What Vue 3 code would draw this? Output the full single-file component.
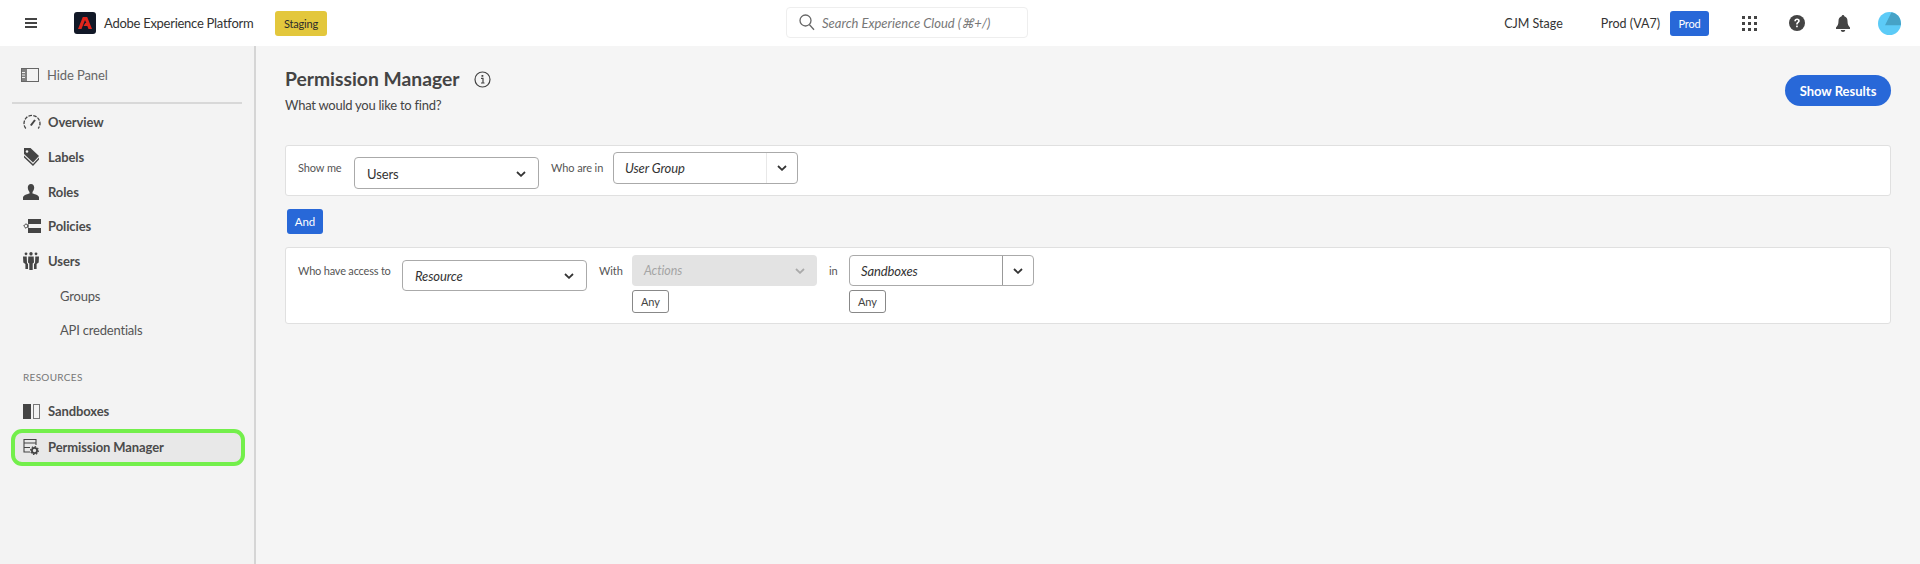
<script setup>
const navTop = [
  { label: 'Overview', icon: 'overview' },
  { label: 'Labels', icon: 'labels' },
  { label: 'Roles', icon: 'roles' },
  { label: 'Policies', icon: 'policies' },
  { label: 'Users', icon: 'users' },
]
const dots = []
for (let r = 0; r < 3; r++) for (let c = 0; c < 3; c++) dots.push({ x: c * 6, y: r * 6 })
</script>

<template>
  <div class="app">
    <header class="topbar">
      <div class="left">
        <svg class="burger" width="12" height="10" viewBox="0 0 12 10"><path d="M0 0h12v2H0zM0 4h12v2H0zM0 8h12v2H0z" fill="#444"/></svg>
        <svg class="logo" width="22" height="22" viewBox="0 0 22 22">
          <rect width="22" height="22" rx="3" fill="#111827"/>
          <path d="M8.800 5h4.400L18 17h-3.500l-1.200-3H9.500l1.900-3h.9L11 8 7.500 17H4z" fill="#e1251b"/>
        </svg>
        <span class="brand">Adobe Experience Platform</span>
        <span class="badge staging">Staging</span>
      </div>
      <div class="search">
        <svg width="16" height="17" viewBox="0 0 16 17" fill="none" stroke="#666" stroke-width="1.300"><circle cx="6.500" cy="6.500" r="5.500"/><path d="M10.500 10.800 15 15.700"/></svg>
        <span>Search Experience Cloud (⌘+/)</span>
      </div>
      <div class="right">
        <span class="org">CJM Stage</span>
        <span class="org prod">Prod (VA7)</span>
        <span class="badge prodbadge">Prod</span>
        <svg class="grid-ic" width="15" height="15" viewBox="0 0 15 15"><rect v-for="(d, i) in dots" :key="i" :x="d.x" :y="d.y" width="3" height="3" fill="#444"/></svg>
        <svg class="help-ic" width="16" height="16" viewBox="0 0 16 16"><circle cx="8" cy="8" r="8" fill="#444"/><path d="M5.300 6.200c0-1.600 1.200-2.600 2.800-2.600s2.700.9 2.700 2.300c0 1.900-2.100 1.900-2.100 3.500H7.100c0-2.300 1.900-2.300 1.900-3.400 0-.5-.4-.9-1-.9s-1 .4-1 1.100z" fill="#fff"/><rect x="7.100" y="10.500" width="1.700" height="1.800" rx=".5" fill="#fff"/></svg>
        <svg class="bell-ic" width="16" height="17" viewBox="0 0 16 17"><path d="M8 0c.8 0 1.300.6 1.300 1.300 2.200.6 3.200 2.400 3.200 4.700 0 3.500 1 5 2.500 6.500V14H1v-1.500C2.500 11 3.500 9.500 3.500 6c0-2.300 1-4.100 3.200-4.700C6.700.6 7.200 0 8 0zM5.800 15h4.400c0 1-1 2-2.200 2s-2.200-1-2.200-2z" fill="#444"/></svg>
        <svg class="avatar" width="23" height="23" viewBox="0 0 23 23"><circle cx="11.500" cy="11.500" r="11.500" fill="#5ccbf7"/><path d="M13.500.2A11.500 11.500 0 0 1 23 11.500c0 .9-.1 1.300-.2 1.800H7z" fill="#46a3c7"/></svg>
      </div>
    </header>

    <div class="body">
      <aside class="sidebar">
        <div class="hide">
          <svg width="18" height="14" viewBox="0 0 18 14" fill="none"><rect x=".5" y=".5" width="17" height="13" stroke="#666"/><rect x="1" y="1" width="5" height="12" fill="#808080"/><path d="M1 4.500h3M1 7h3M1 9.500h3" stroke="#eee"/></svg>
          <span>Hide Panel</span>
        </div>
        <div class="divider"></div>
        <nav class="nav">
          <div v-for="item in navTop" :key="item.label" class="nav-item">
            <span class="nav-ic">
              <svg v-if="item.icon === 'overview'" width="18" height="16" viewBox="0 0 18 16" fill="none" stroke="#444" stroke-width="1.300"><path d="M2.800 14.500A8 8 0 1 1 15.200 14.500" stroke-dasharray="3.500 1.200"/><path d="M7.800 11.500 12 6" stroke-width="2"/></svg>
              <svg v-else-if="item.icon === 'labels'" width="17" height="18" viewBox="0 0 17 18"><path d="M1 0h6.500L16 8l-6 6.500L1 6z" fill="#444"/><circle cx="4" cy="3.500" r="1.300" fill="#f3f3f3"/><path d="M1 7.500 10 16l6-6.500v2L10 18 1 9.500z" fill="#444"/></svg>
              <svg v-else-if="item.icon === 'roles'" width="16" height="16" viewBox="0 0 16 16"><path d="M8 0c2 0 3.200 1.500 3.200 3.600 0 1.800-.8 3.400-1.700 4.400v1.500c3 .7 6.500 2 6.500 4V16H0v-2.500c0-2 3.500-3.300 6.500-4V8C5.600 7 4.800 5.400 4.800 3.600 4.800 1.500 6 0 8 0z" fill="#444"/></svg>
              <svg v-else-if="item.icon === 'policies'" width="18" height="14" viewBox="0 0 18 14" fill="none"><path d="M5 0h13v5H5zM5 9h13v5H5z" fill="#444"/><path d="M3 4.700 5.300 7 3 9.300.7 7z" stroke="#444" stroke-width="1"/><path d="M5 5v4" stroke="#444"/></svg>
              <svg v-else-if="item.icon === 'users'" width="16" height="18" viewBox="0 0 16 18" fill="#444"><circle cx="8" cy="1.800" r="1.700"/><circle cx="3" cy="1.800" r="1.400"/><circle cx="13" cy="1.800" r="1.400"/><path d="M5.300 4.500h5.400l.3 6-1.300 1V18H6.300v-6.500l-1.300-1zM0 4.500h3.700l.3 6.500 1 1V17H2.400v-5L.3 10.500zM16 4.500h-3.700L12 11l-1 1v5h2.600v-5l2.100-1.500z"/></svg>
            </span>
            <span>{{ item.label }}</span>
          </div>
          <div class="nav-sub">Groups</div>
          <div class="nav-sub">API credentials</div>
        </nav>
        <div class="section">RESOURCES</div>
        <div class="nav-item">
          <span class="nav-ic"><svg width="17" height="15" viewBox="0 0 17 15" fill="none"><rect width="8" height="15" fill="#444"/><rect x="10.500" y=".5" width="6" height="14" stroke="#777"/></svg></span>
          <span>Sandboxes</span>
        </div>
        <div class="nav-item active">
          <span class="nav-ic"><svg width="16" height="16" viewBox="0 0 16 16" fill="none"><path d="M7 13H1V.5h12V6M1 4h12M1 8.500h6" stroke="#444" stroke-width="1.100"/><circle cx="11.500" cy="11.500" r="2.600" stroke="#444" stroke-width="1.800"/><circle cx="11.500" cy="11.500" r="3.900" stroke="#444" stroke-width="1.200" stroke-dasharray="1.500 1.500"/></svg></span>
          <span>Permission Manager</span>
        </div>
      </aside>

      <main class="main">
        <div class="head">
          <div>
            <div class="title-row">
              <h1>Permission Manager</h1>
              <svg width="17" height="17" viewBox="0 0 17 17" fill="none"><circle cx="8.500" cy="8.500" r="7.500" stroke="#444" stroke-width="1.200"/><path d="M7 7.300h2v4.500M7 12h3.500" stroke="#444" stroke-width="1.200"/><rect x="7.500" y="4" width="1.800" height="1.800" fill="#444"/></svg>
            </div>
            <p class="sub">What would you like to find?</p>
          </div>
          <button class="results">Show Results</button>
        </div>

        <section class="card card-one">
          <span class="lbl show">Show me</span>
          <div class="select users"><span>Users</span><svg class="chev" width="10" height="6" viewBox="0 0 10 6"><path d="M1 1l4 3.800L9 1" fill="none" stroke="#333" stroke-width="1.800"/></svg></div>
          <span class="lbl who">Who are in</span>
          <div class="combo group"><em>User Group</em><span class="combo-btn"><svg class="chev" width="10" height="6" viewBox="0 0 10 6"><path d="M1 1l4 3.800L9 1" fill="none" stroke="#333" stroke-width="1.800"/></svg></span></div>
        </section>

        <button class="and">And</button>

        <section class="card card-two">
          <span class="lbl access">Who have access to</span>
          <div class="select resource"><em>Resource</em><svg class="chev" width="10" height="6" viewBox="0 0 10 6"><path d="M1 1l4 3.800L9 1" fill="none" stroke="#333" stroke-width="1.800"/></svg></div>
          <span class="lbl with">With</span>
          <div class="stack">
            <div class="select disabled"><em>Actions</em><svg class="chev" width="10" height="6" viewBox="0 0 10 6"><path d="M1 1l4 3.800L9 1" fill="none" stroke="#aaa" stroke-width="1.800"/></svg></div>
            <button class="any">Any</button>
          </div>
          <span class="lbl in">in</span>
          <div class="stack">
            <div class="combo sandboxes"><em>Sandboxes</em><span class="combo-btn dark"><svg class="chev" width="10" height="6" viewBox="0 0 10 6"><path d="M1 1l4 3.800L9 1" fill="none" stroke="#333" stroke-width="1.800"/></svg></span></div>
            <button class="any">Any</button>
          </div>
        </section>
      </main>
    </div>
  </div>
</template>

<style>
html, body { margin: 0; background: #f5f5f5; }
</style>

<style scoped>
.app { font-family: Lato, "Open Sans", sans-serif; color: #444; height: 564px; overflow: hidden; display: flex; flex-direction: column; }
.topbar { height: 46px; flex: none; background: #fff; display: grid; grid-template-columns: 786px 242px 1fr; align-items: center; }
.left { display: flex; align-items: center; padding-left: 25px; }
.burger { margin-right: 37px; }
.logo { margin-right: 8px; }
.brand { font-size: 13px; letter-spacing: -.27px; color: #333; width: 149px; white-space: nowrap; margin-right: 22px; }
.badge { height: 25px; border-radius: 3px; display: flex; align-items: center; justify-content: center; font-size: 11px; letter-spacing: -.2px; box-sizing: border-box; }
.staging { width: 52px; background: #e3c73c; color: #2c2c2c; }
.search { height: 31px; margin-top: -1px; box-sizing: border-box; border: 1px solid #eee; border-radius: 4px; display: flex; align-items: center; gap: 7px; padding-left: 12px; font-size: 13px; font-style: italic; color: #777; white-space: nowrap; }
.right { display: flex; align-items: center; justify-content: flex-end; padding-right: 19px; font-size: 12.500px; color: #333; }
.org { margin-right: 38px; }
.org.prod { margin-right: 10px; }
.prodbadge { width: 39px; background: #2868d8; color: #fff; margin-right: 33px; }
.grid-ic { margin-right: 32px; }
.help-ic { margin-right: 30px; }
.bell-ic { margin-right: 27px; }
.body { flex: 1; display: flex; min-height: 0; }
.sidebar { width: 254px; flex: none; box-sizing: content-box; background: #f3f3f3; border-right: 2px solid #d5d5d5; padding-top: 11px; font-size: 13px; }
.hide { height: 36px; display: flex; align-items: center; gap: 8px; padding-left: 21px; color: #666; margin-bottom: 9px; letter-spacing: -.1px; }
.divider { height: 2px; background: #d8d8d8; margin: 0 12px 1px; }
.nav-item { height: 34.700px; display: flex; align-items: center; padding-left: 23px; font-weight: 700; color: #4b4b4b; letter-spacing: -.1px; }
.nav-ic { width: 25px; flex: none; display: flex; align-items: center; }
.nav-sub { height: 34.700px; display: flex; align-items: center; padding-left: 60px; color: #555; letter-spacing: -.2px; }
.section { font-size: 10px; letter-spacing: .3px; color: #777; padding-left: 23px; margin: 19px 0 7px; height: 20px; display: flex; align-items: center; }
.active { margin: 0 9px 0 11px; height: 37px; box-sizing: border-box; border: 4px solid #73ef4b; border-radius: 11px; background: #e8e8e8; padding-left: 8px; }
.main { flex: 1; min-width: 0; background: #f5f5f5; padding: 0 29px; box-sizing: border-box; }
.head { display: flex; justify-content: space-between; height: 99px; }
.title-row { display: flex; align-items: center; gap: 15px; margin-top: 21px; }
h1 { margin: 0; font-size: 19.300px; line-height: 24px; font-weight: 700; color: #444; }
.sub { margin: 5px 0 0; font-size: 13px; letter-spacing: -.25px; line-height: 18px; color: #444; }
.results { margin-top: 29px; width: 106px; height: 31px; border: 0; border-radius: 16px; background: #2868d8; color: #fff; font: 700 13px Lato, sans-serif; padding: 0; }
.card { background: #fff; border: 1px solid #e0e0e0; border-radius: 3px; box-sizing: border-box; display: flex; align-items: flex-start; font-size: 11px; }
.card-one { height: 51px; padding-left: 12px; }
.card-two { height: 77px; padding-left: 12px; }
.lbl { color: #555; line-height: 16px; white-space: nowrap; flex: none; letter-spacing: -.1px; }
.select, .combo { display: flex; align-items: center; box-sizing: border-box; flex: none; width: 185px; border: 1px solid #aaa; border-radius: 4px; background: #fff; font-size: 13px; letter-spacing: -.1px; color: #333; }
.select { justify-content: space-between; padding: 0 12px; }
.chev { flex: none; }
.show { margin-top: 14px; width: 56px; }
.users { height: 32px; margin: 11px 12px 0 0; padding-top: 2px; }
.who { margin-top: 14px; width: 62px; }
.group { height: 32px; margin-top: 6px; }
.combo em { flex: 1; padding-left: 11px; }
.combo-btn { width: 31px; height: 100%; flex: none; display: flex; align-items: center; justify-content: center; border-left: 1px solid #e8e8e8; box-sizing: border-box; }
.combo-btn.dark { border-left-color: #999; }
.and { display: block; margin: 13px 0 13px 2px; width: 36px; height: 25px; border: 0; border-radius: 3px; background: #2868d8; color: #fff; font: 11.500px Lato, sans-serif; padding: 0; }
.access { margin-top: 15px; width: 104px; letter-spacing: -.2px; }
.resource { height: 31px; margin: 12px 12px 0 0; }
.with { margin-top: 15px; width: 33px; }
.stack { margin-top: 7px; flex: none; display: flex; flex-direction: column; align-items: flex-start; gap: 4px; }
.disabled { height: 31px; border: 0; background: #e3e3e3; color: #a5a5a5; }
.disabled em { font-size: 12.500px; }
.in { margin: 15px 0 0 12px; width: 20px; }
.sandboxes { height: 31px; }
.any { width: 37px; height: 23px; border: 1px solid #888; border-radius: 3px; background: #fff; color: #444; font: 11px Lato, sans-serif; padding: 0; }
</style>
